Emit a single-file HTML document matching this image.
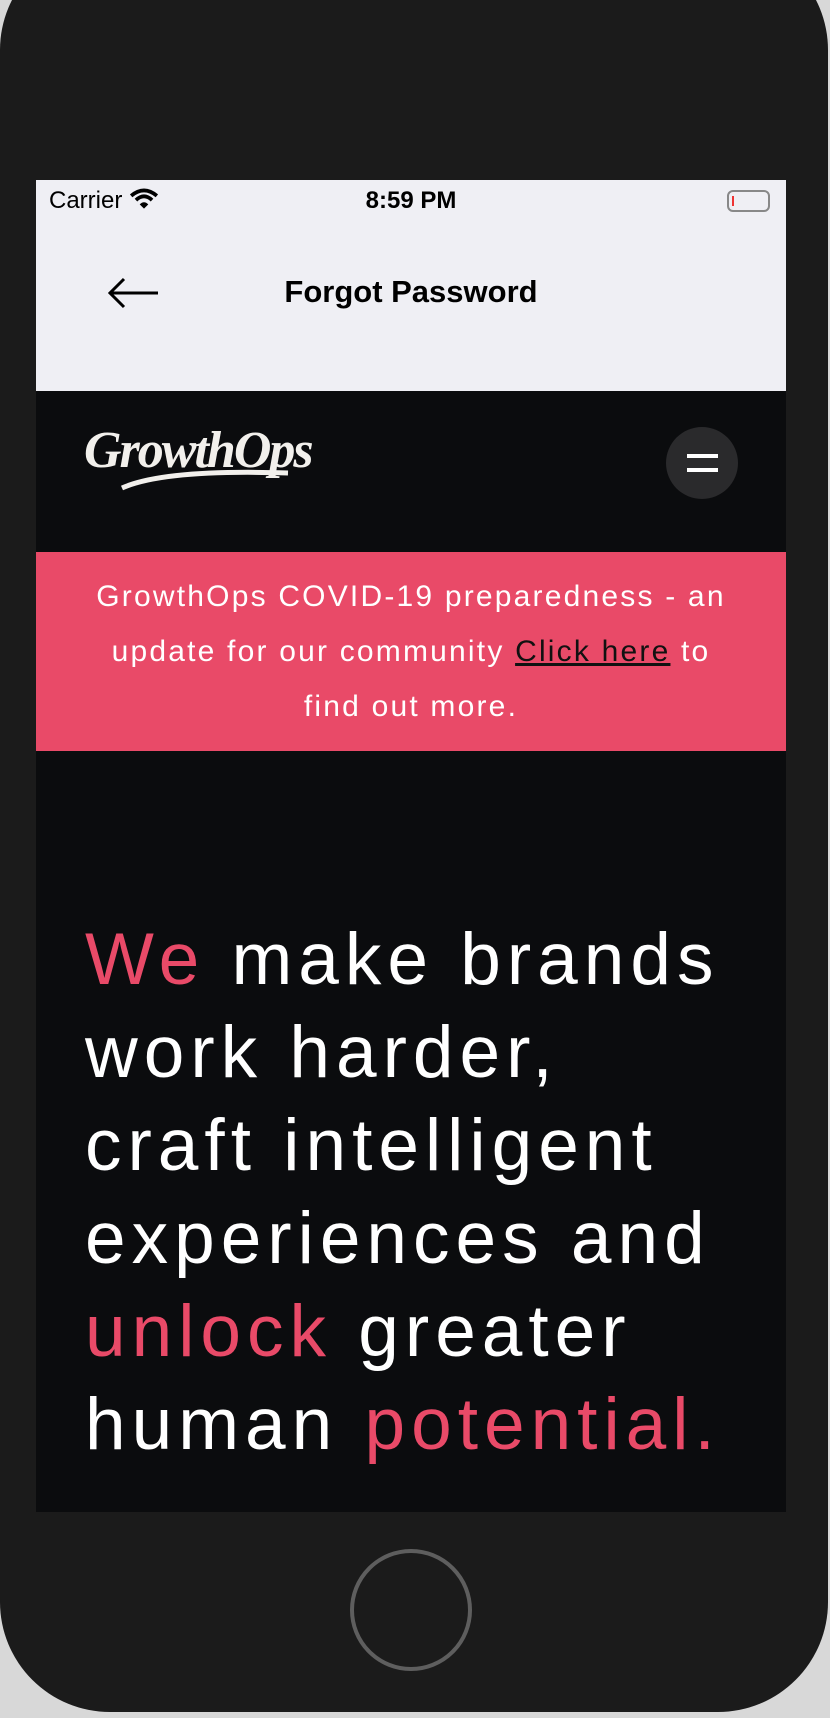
<!DOCTYPE html>
<html><head><meta charset="utf-8"><style>
*{margin:0;padding:0;box-sizing:border-box}
body{width:830px;height:1718px;background:#d8d8d8;position:relative;overflow:hidden;font-family:"Liberation Sans",sans-serif}
.phone{position:absolute;left:0;top:-60px;width:828px;height:1772px;background:#1b1b1b;border-radius:110px}
.scr{position:absolute;left:36px;top:180px;width:750px;height:1332px;background:#0b0c0e;overflow:hidden}
.top{position:absolute;left:0;top:0;width:750px;height:211px;background:#efeff4}
.st{position:absolute;top:7px;font-size:24px;color:#000}
.nav{position:absolute;left:0;top:211px;width:750px;height:161px;background:#0b0c0e}
.ban{position:absolute;left:0;top:372px;width:750px;height:199px;background:#e94a68;color:#fff;text-align:center;font-size:30px;line-height:55px;padding-top:17px;letter-spacing:2.2px}
.h{position:absolute;left:49px;top:733px;color:#fff;font-size:73px;line-height:93px;white-space:nowrap;letter-spacing:6px}
.p{color:#e94a68}
</style></head><body>
<div class="phone"></div>
<div class="scr">
 <div class="top">
  <div class="st" style="left:13px">Carrier <svg width="30" height="22" viewBox="0 0 28 20" style="vertical-align:-2px"><path d="M2 7 Q14 -3 26 7" stroke="#000" stroke-width="3.5" fill="none"/><path d="M6.5 11 Q14 4 21.5 11" stroke="#000" stroke-width="3.5" fill="none"/><path d="M10 15 L14 19 L18 15 Q14 11 10 15Z" fill="#000"/></svg></div>
  <div class="st" style="left:0;width:750px;text-align:center;font-weight:bold">8:59 PM</div>
  <div style="position:absolute;left:691px;top:10px;width:43px;height:22px;border:2px solid #888;border-radius:6px"><div style="position:absolute;left:3px;top:4px;width:2px;height:10px;background:#e33"></div></div>
  <svg style="position:absolute;left:70px;top:96px" width="54" height="34" viewBox="0 0 54 34"><path d="M52 17 H4 M18 3 L4 17 L18 31" stroke="#000" stroke-width="3" fill="none"/></svg>
  <div style="position:absolute;left:0;width:750px;top:94px;text-align:center;font-size:31px;font-weight:bold;color:#000">Forgot Password</div>
 </div>
 <div class="nav">
  <div style="position:absolute;left:48px;top:30px;font-family:'Liberation Serif',serif;font-style:italic;font-weight:bold;font-size:52px;color:#f2f0ec;letter-spacing:-2px">GrowthOps</div>
  <svg style="position:absolute;left:84px;top:72px" width="170" height="28" viewBox="0 0 170 28"><path d="M2 25 Q45 6 168 10" stroke="#f2f0ec" stroke-width="5" fill="none"/></svg>
  <div style="position:absolute;left:630px;top:36px;width:72px;height:72px;border-radius:50%;background:#2a2a2c"></div>
  <div style="position:absolute;left:651px;top:63px;width:31px;height:4px;background:#fff"></div>
  <div style="position:absolute;left:651px;top:77px;width:31px;height:4px;background:#fff"></div>
 </div>
 <div class="ban">GrowthOps COVID-19 preparedness - an<br>update for our community <u style="color:#111">Click here</u> to<br>find out more.</div>
 <div class="h"><span class="p">We</span> make brands<br>work harder,<br>craft intelligent<br>experiences and<br><span class="p">unlock</span> greater<br>human <span class="p">potential.</span></div>
</div>
<div style="position:absolute;left:350px;top:1549px;width:122px;height:122px;border-radius:50%;border:4px solid #5e5e5e"></div>
</body></html>
